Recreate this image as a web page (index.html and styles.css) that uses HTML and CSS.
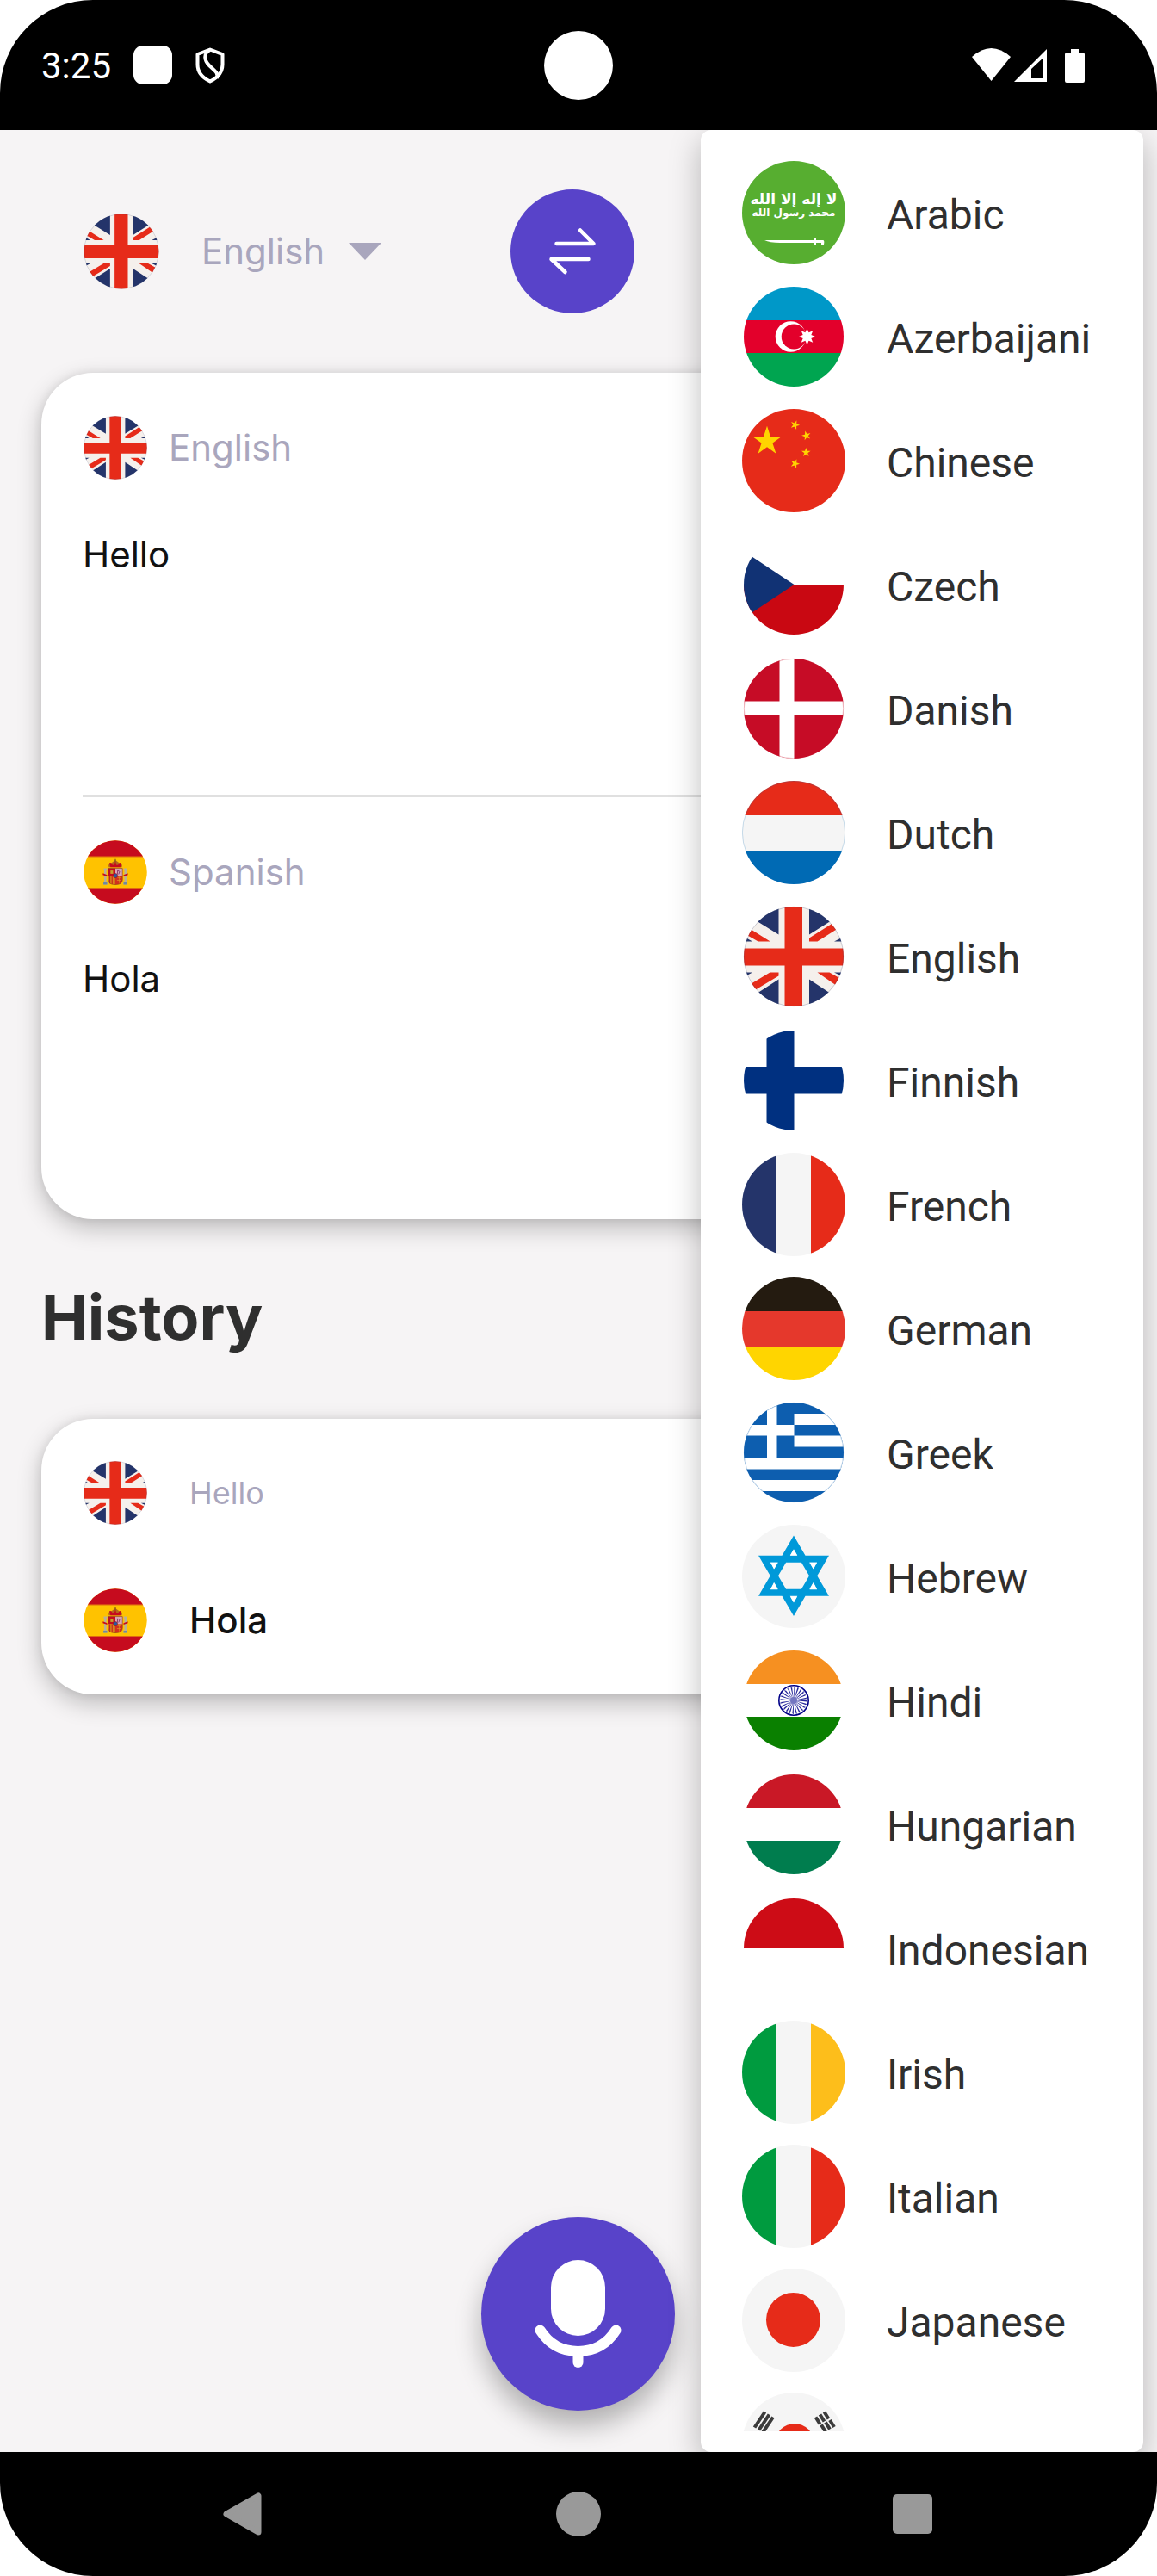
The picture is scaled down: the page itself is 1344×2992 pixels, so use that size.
FILE: index.html
```html
<!DOCTYPE html>
<html lang="en">
<head>
<meta charset="utf-8">
<meta name="viewport" content="width=device-width, initial-scale=1">
<title>Translator</title>
<link rel="stylesheet" href="styles.css">
</head>
<body>

<!-- Flag sprite -->
<svg class="sprite" aria-hidden="true">
  <defs>
    <clipPath id="disc"><circle cx="60" cy="60" r="60"/></clipPath>
    <clipPath id="disc-inset"><circle cx="60" cy="60" r="58"/></clipPath>
    <polygon id="star5" points="0,-1 .588,.809 -.951,-.309 .951,-.309 -.588,.809"/>

    <symbol id="flag-sa" viewBox="0 0 120 120">
      <circle cx="60" cy="60" r="60" fill="#57ae30"/>
      <g fill="#fff" font-family="DejaVu Sans, sans-serif" font-weight="700" text-anchor="middle">
        <text x="60" y="50" font-size="17" direction="rtl">لا إله إلا الله</text>
        <text x="60" y="64" font-size="12" direction="rtl">محمد رسول الله</text>
      </g>
      <path d="M26 92h58v-2h2v2h8q2 0 1 5h-3v-2h-6v2h-2v-2H44q-12 0-18-3z" fill="#fff"/>
    </symbol>

    <symbol id="flag-az" viewBox="0 0 120 120">
      <g clip-path="url(#disc-inset)">
        <path d="M0 0h120v41H0z" fill="#0098c8"/>
        <path d="M0 41h120v38H0z" fill="#e3002b"/>
        <path d="M0 79h120v41H0z" fill="#00a550"/>
      </g>
      <circle cx="56.5" cy="60" r="17.8" fill="#fff"/>
      <circle cx="60.2" cy="60" r="14.5" fill="#e3002b"/>
      <polygon transform="translate(75.5 60) scale(9.5)" fill="#fff" points="0,-1 .21,-.508 .707,-.707 .508,-.21 1,0 .508,.21 .707,.707 .21,.508 0,1 -.21,.508 -.707,.707 -.508,.21 -1,0 -.508,-.21 -.707,-.707 -.21,-.508"/>
    </symbol>

    <symbol id="flag-cn" viewBox="0 0 120 120">
      <circle cx="60" cy="60" r="60" fill="#e62b19"/>
      <g fill="#ffd500">
        <use href="#star5" transform="translate(29 37.5) scale(17.7)"/>
        <use href="#star5" transform="translate(61.5 18.5) rotate(20) scale(5.6)"/>
        <use href="#star5" transform="translate(74.7 31) rotate(-15) scale(5.6)"/>
        <use href="#star5" transform="translate(74.3 50.5) scale(5.6)"/>
        <use href="#star5" transform="translate(61.5 63.5) rotate(20) scale(5.6)"/>
      </g>
    </symbol>

    <symbol id="flag-cz" viewBox="0 0 120 120">
      <g clip-path="url(#disc-inset)">
        <path d="M0 0h120v60H0z" fill="#fff"/>
        <path d="M0 60h120v60H0z" fill="#c90812"/>
        <path d="M0 20l60.500 40L0 100z" fill="#113274"/>
      </g>
    </symbol>

    <symbol id="flag-dk" viewBox="0 0 120 120">
      <g clip-path="url(#disc-inset)">
        <path d="M0 0h120v120H0z" fill="#c60c26"/>
        <path d="M43.500 0h17v120h-17zM0 51.500h120V68H0z" fill="#fff"/>
      </g>
      <circle cx="60" cy="60" r="57.700" fill="none" stroke="#c60c26" stroke-opacity=".4" stroke-width=".6"/>
    </symbol>

    <symbol id="flag-nl" viewBox="0 0 120 120">
      <g clip-path="url(#disc)">
        <path d="M0 0h120v40H0z" fill="#e62b19"/>
        <path d="M0 40h120v41H0z" fill="#f5f5f5"/>
        <path d="M0 81h120v39H0z" fill="#006ab4"/>
      </g>
      <circle cx="60" cy="60" r="59.600" fill="none" stroke="#006ab4" stroke-opacity=".25" stroke-width=".8"/>
    </symbol>

    <symbol id="flag-gb" viewBox="0 0 120 120">
      <g clip-path="url(#disc-inset)">
        <path d="M0 0h120v120H0z" fill="#f5f0ec"/>
        <path fill="#24346a" d="M42.500 0v34.500L19 20-10 0zM78 0v34.500L101 20l29-20zM42.500 120V86.500L20 101l-30 19zM78 120V86.500L100 101l30 19zM5 38.500l7 4H0zM115 38.500l-8 4h13zM12 78.500H0v6.500zM107 78.500h13v6.500z"/>
        <path fill="#e62b19" d="M0 22l32.700 20.500h-14L0 32zM78 42.500V38.500L120 12v10L87.500 42.500zM42.500 78.500V82.500L0 108V98l32.400-19.500zM87.500 78.500h14L120 89v12z"/>
        <path fill="#e62b19" d="M49.500 0h20.500v120H49.500zM0 50.500h120v20H0z"/>
      </g>
      <circle cx="60" cy="60" r="57.700" fill="none" stroke="#24346a" stroke-opacity=".35" stroke-width=".6"/>
    </symbol>

    <symbol id="flag-fi" viewBox="0 0 120 120">
      <g clip-path="url(#disc-inset)">
        <path d="M0 0h120v120H0z" fill="#fff"/>
        <path d="M28.500 0h32v120h-32zM0 44h120v31.500H0z" fill="#003080"/>
      </g>
    </symbol>

    <symbol id="flag-fr" viewBox="0 0 120 120">
      <g clip-path="url(#disc)">
        <path d="M0 0h40v120H0z" fill="#24346a"/>
        <path d="M40 0h40v120H40z" fill="#f5f5f5"/>
        <path d="M80 0h40v120H80z" fill="#e62b19"/>
      </g>
    </symbol>

    <symbol id="flag-de" viewBox="0 0 120 120">
      <g clip-path="url(#disc)">
        <path d="M0 0h120v40H0z" fill="#241b10"/>
        <path d="M0 40h120v41H0z" fill="#e5382c"/>
        <path d="M0 81h120v39H0z" fill="#ffd500"/>
      </g>
    </symbol>

    <symbol id="flag-gr" viewBox="0 0 120 120">
      <g clip-path="url(#disc-inset)">
        <path d="M0 0h120v120H0z" fill="#0d5eaf"/>
        <path d="M60.500 15H120v13H60.500zM60.500 40.500H120v13H60.500zM0 66.500h120v13H0zM0 92h120v13H0zM29 0h11.500v66.500H29zM0 28h60.500v12.500H0z" fill="#fff"/>
      </g>
      <circle cx="60" cy="60" r="57.700" fill="none" stroke="#0d5eaf" stroke-opacity=".35" stroke-width=".6"/>
    </symbol>

    <symbol id="flag-il" viewBox="0 0 120 120">
      <circle cx="60" cy="60" r="60" fill="#f5f5f5"/>
      <path d="M60 20.500l34 58.300H26zM60 98L26 39.700h68z" fill="none" stroke="#0099d9" stroke-width="8"/>
      <path d="M60 28.500l4 7.100h-8zM60 90.500l4-7.100h-8zM33 43.700h8.500L37 51.500zM87 43.700h-8.500L83 51.500zM33 75.300h8.500L37 67zM87 75.300h-8.500L83 67z" fill="#fff"/>
    </symbol>

    <symbol id="flag-in" viewBox="0 0 120 120">
      <g clip-path="url(#disc-inset)">
        <path d="M0 0h120v120H0z" fill="#fff"/>
        <path d="M0 0h120v41H0z" fill="#f69021"/>
        <path d="M0 79h120v41H0z" fill="#0a8000"/>
      </g>
      <circle cx="60" cy="60" r="17.200" fill="none" stroke="#000088" stroke-width="1.600"/>
      <circle cx="60" cy="60" r="15.500" fill="none" stroke="#000088" stroke-width="1" stroke-dasharray="1 3.060"/>
      <circle cx="60" cy="60" r="8" fill="none" stroke="#000088" stroke-width="14" stroke-opacity=".85" stroke-dasharray=".8 1.294"/>
      <circle cx="60" cy="60" r="4" fill="#7476c0"/>
    </symbol>

    <symbol id="flag-hu" viewBox="0 0 120 120">
      <g clip-path="url(#disc-inset)">
        <path d="M0 0h120v120H0z" fill="#fff"/>
        <path d="M0 0h120v41H0z" fill="#c91826"/>
        <path d="M0 79h120v41H0z" fill="#007d4e"/>
      </g>
    </symbol>

    <symbol id="flag-id" viewBox="0 0 120 120">
      <g clip-path="url(#disc-inset)">
        <path d="M0 0h120v120H0z" fill="#fff"/>
        <path d="M0 0h120v60H0z" fill="#cd0c16"/>
      </g>
    </symbol>

    <symbol id="flag-ie" viewBox="0 0 120 120">
      <g clip-path="url(#disc)">
        <path d="M0 0h40v120H0z" fill="#009b3f"/>
        <path d="M40 0h40v120H40z" fill="#f5f5f5"/>
        <path d="M80 0h40v120H80z" fill="#fdbe1b"/>
      </g>
    </symbol>

    <symbol id="flag-it" viewBox="0 0 120 120">
      <g clip-path="url(#disc)">
        <path d="M0 0h40v120H0z" fill="#009b3f"/>
        <path d="M40 0h40v120H40z" fill="#f5f5f5"/>
        <path d="M80 0h40v120H80z" fill="#e62b19"/>
      </g>
    </symbol>

    <symbol id="flag-jp" viewBox="0 0 120 120">
      <circle cx="60" cy="60" r="60" fill="#f5f5f5"/>
      <circle cx="59.500" cy="59.500" r="31.500" fill="#e62b19"/>
    </symbol>

    <symbol id="flag-kr" viewBox="0 0 120 120">
      <circle cx="60" cy="60" r="60" fill="#f5f5f5"/>
      <g fill="none" stroke="#3b3b3b" stroke-width="4">
        <path d="M26.500 22.500L14.500 40.500M31.500 25.500L19.500 43.500M36 28.500L24 46.500"/>
        <path d="M85.500 28.500l5 8M92 37.500l5 8M90.500 25.500l5 8M97 34.500l5 8M95.500 22.500l5 8M102 32l5 8"/>
        <path d="M14.500 80l12 18M19.500 77l12 18M24 74l12 18M97 74L85 92M102 77L90 95M107 80L95 98"/>
      </g>
      <path d="M38.500 58.500a22.500 22.500 0 0 1 45 0z" fill="#e62b19"/>
      <path d="M38.500 58.500a22.500 22.500 0 0 0 45 0z" fill="#24346a"/>
    </symbol>

    <symbol id="flag-es" viewBox="0 0 120 120">
      <g clip-path="url(#disc-inset)">
        <path d="M0 0h120v120H0z" fill="#ffc200"/>
        <path d="M0 0h120v31H0zM0 90h120v30H0z" fill="#c60b1e"/>
        <path d="M0 31h120v1.500H0zM0 88.500h120V90H0z" fill="#e06a10"/>
      </g>
      <path d="M39 53h6v3h-1.500v22H45v5h-7v-5h1.500V56H38zM76 53h6v3h-1.500v22H82v5h-7v-5h1.500V56H75z" fill="#b9b09a"/>
      <path d="M37 62l8 3v3l-8-3zM83 62l-8 3v3l8-3z" fill="#c60b1e"/>
      <path d="M38 79h7v4h-7zM75 79h7v4h-7z" fill="#6f8aa0"/>
      <path d="M48 51q-2-7 5-8l7-5 7 5q7 1 5 8z" fill="#b5651d"/>
      <path d="M49 43q4-2 6 4h3l2-7 2 7h3q2-6 6-4l-2 8H51z" fill="#c60b1e"/>
      <path d="M59 36h2v6h-2z" fill="#8a5a1a"/>
      <path d="M47 53h13v14H47z" fill="#c60b1e"/>
      <path d="M60 53h13v14H60z" fill="#d9a5b8"/>
      <path d="M47 67h13v16q-13 0-13-9z" fill="#d8871a"/>
      <path d="M60 67h13v7q0 9-13 9z" fill="#d2301e"/>
      <path d="M50 67v14M54 67v15M58 67v16" stroke="#c60b1e" stroke-width="1.500"/>
      <path d="M51 57h5v6h-5z" fill="#c8a12a"/>
      <path d="M64 70h6M63 75h8M67 68v12" stroke="#e0a020" stroke-width="1"/>
      <path d="M64 64v-7l4 2-2 5" fill="none" stroke="#8a3a6a" stroke-width="1.500"/>
      <circle cx="60" cy="66.500" r="4" fill="#2a5aa0" stroke="#a11" stroke-width="1"/>
      <path d="M47 53h26v21q0 9-13 9t-13-9z" fill="none" stroke="#8a3a1a" stroke-width="1"/>
    </symbol>
  </defs>
</svg>

<div class="phone">
  <header class="status-bar">
    <span class="status-time">3:25</span>
    <span class="status-square"></span>
    <svg class="status-shield" viewBox="0 0 34 42" aria-hidden="true">
      <g fill="none" stroke="#fff" stroke-width="4" stroke-linejoin="round">
        <path d="M17 2.500L31.500 8v12c0 9-6 15.500-14.500 19.500C8.500 35.500 2.500 29 2.500 20V8z"/>
        <path d="M17 3c-8 4-7 12-1 18s11 8 9 15"/>
      </g>
    </svg>
    <span class="status-spacer"></span>
    <svg class="status-net" viewBox="0 0 88 40" aria-hidden="true">
      <path d="M0 10Q22.500-10 45 10L22.500 38z" fill="#fff"/>
      <path d="M87 1v38H49zM83 11L69 24v11h14z" fill="#fff" fill-rule="evenodd"/>
    </svg>
    <svg class="status-battery" viewBox="0 0 23 40" aria-hidden="true">
      <path d="M7 1h9v4h5q2 0 2 2v31q0 2-2 2H2q-2 0-2-2V7q0-2 2-2h5z" fill="#fff"/>
    </svg>
    <span class="camera"></span>
  </header>

  <main class="screen">
    <section class="language-bar">
      <label class="picker">
        <svg class="flag flag-medium" aria-hidden="true"><use href="#flag-gb"/></svg>
        <select class="picker-select" aria-label="Source language">
          <option>English</option>
          <option>Spanish</option>
        </select>
        <svg class="picker-arrow" viewBox="0 0 38 20" aria-hidden="true"><path d="M0 0h38L19 20z" fill="#a9a6bd"/></svg>
      </label>
      <button class="swap" type="button" aria-label="Swap languages">
        <svg viewBox="0 0 144 144" aria-hidden="true">
          <path d="M53.500 63h43L81 47.500M90.500 81h-43L63.500 96" fill="none" stroke="#fff" stroke-width="4.500" stroke-linecap="round" stroke-linejoin="round"/>
        </svg>
      </button>
    </section>

    <section class="card">
      <div class="pane">
        <label class="pane-head" for="source-text">
          <svg class="flag flag-small" aria-hidden="true"><use href="#flag-gb"/></svg>
          <span class="muted">English</span>
        </label>
        <textarea class="pane-text" id="source-text" spellcheck="false">Hello</textarea>
      </div>
      <hr class="divider">
      <div class="pane">
        <label class="pane-head" for="target-text">
          <svg class="flag flag-small" aria-hidden="true"><use href="#flag-es"/></svg>
          <span class="muted">Spanish</span>
        </label>
        <textarea class="pane-text" id="target-text" spellcheck="false" readonly>Hola</textarea>
      </div>
    </section>

    <h1 class="title">History</h1>

    <article class="card history">
      <div class="history-row">
        <svg class="flag flag-small" aria-hidden="true"><use href="#flag-gb"/></svg>
        <span class="history-source">Hello</span>
      </div>
      <div class="history-row">
        <svg class="flag flag-small" aria-hidden="true"><use href="#flag-es"/></svg>
        <span class="history-target">Hola</span>
      </div>
    </article>

    <button class="mic" type="button" aria-label="Speak">
      <svg viewBox="0 0 225 225" aria-hidden="true">
        <rect x="81" y="50" width="63" height="88" rx="31.500" fill="#fff"/>
        <path d="M68.500 131.500Q84 156 112.500 156t44-24.500" fill="none" stroke="#fff" stroke-width="12" stroke-linecap="round"/>
        <path d="M112.500 158v11" stroke="#fff" stroke-width="12" stroke-linecap="round"/>
      </svg>
    </button>

    <div class="menu">
      <ul class="menu-list">
        <li><button class="menu-item" type="button"><svg class="flag flag-large" aria-hidden="true"><use href="#flag-sa"/></svg><span>Arabic</span></button></li>
        <li><button class="menu-item" type="button"><svg class="flag flag-large" aria-hidden="true"><use href="#flag-az"/></svg><span>Azerbaijani</span></button></li>
        <li><button class="menu-item" type="button"><svg class="flag flag-large" aria-hidden="true"><use href="#flag-cn"/></svg><span>Chinese</span></button></li>
        <li><button class="menu-item" type="button"><svg class="flag flag-large" aria-hidden="true"><use href="#flag-cz"/></svg><span>Czech</span></button></li>
        <li><button class="menu-item" type="button"><svg class="flag flag-large" aria-hidden="true"><use href="#flag-dk"/></svg><span>Danish</span></button></li>
        <li><button class="menu-item" type="button"><svg class="flag flag-large" aria-hidden="true"><use href="#flag-nl"/></svg><span>Dutch</span></button></li>
        <li><button class="menu-item" type="button"><svg class="flag flag-large" aria-hidden="true"><use href="#flag-gb"/></svg><span>English</span></button></li>
        <li><button class="menu-item" type="button"><svg class="flag flag-large" aria-hidden="true"><use href="#flag-fi"/></svg><span>Finnish</span></button></li>
        <li><button class="menu-item" type="button"><svg class="flag flag-large" aria-hidden="true"><use href="#flag-fr"/></svg><span>French</span></button></li>
        <li><button class="menu-item" type="button"><svg class="flag flag-large" aria-hidden="true"><use href="#flag-de"/></svg><span>German</span></button></li>
        <li><button class="menu-item" type="button"><svg class="flag flag-large" aria-hidden="true"><use href="#flag-gr"/></svg><span>Greek</span></button></li>
        <li><button class="menu-item" type="button"><svg class="flag flag-large" aria-hidden="true"><use href="#flag-il"/></svg><span>Hebrew</span></button></li>
        <li><button class="menu-item" type="button"><svg class="flag flag-large" aria-hidden="true"><use href="#flag-in"/></svg><span>Hindi</span></button></li>
        <li><button class="menu-item" type="button"><svg class="flag flag-large" aria-hidden="true"><use href="#flag-hu"/></svg><span>Hungarian</span></button></li>
        <li><button class="menu-item" type="button"><svg class="flag flag-large" aria-hidden="true"><use href="#flag-id"/></svg><span>Indonesian</span></button></li>
        <li><button class="menu-item" type="button"><svg class="flag flag-large" aria-hidden="true"><use href="#flag-ie"/></svg><span>Irish</span></button></li>
        <li><button class="menu-item" type="button"><svg class="flag flag-large" aria-hidden="true"><use href="#flag-it"/></svg><span>Italian</span></button></li>
        <li><button class="menu-item" type="button"><svg class="flag flag-large" aria-hidden="true"><use href="#flag-jp"/></svg><span>Japanese</span></button></li>
        <li><button class="menu-item" type="button"><svg class="flag flag-large" aria-hidden="true"><use href="#flag-kr"/></svg><span>Korean</span></button></li>
      </ul>
    </div>
  </main>

  <nav class="nav-bar">
    <button class="nav-button" type="button" aria-label="Back">
      <svg viewBox="0 0 52 52" aria-hidden="true"><path d="M5 26L42 5v42z" fill="#999" stroke="#999" stroke-width="7" stroke-linejoin="round"/></svg>
    </button>
    <button class="nav-button" type="button" aria-label="Home">
      <svg viewBox="0 0 52 52" aria-hidden="true"><circle cx="26" cy="26" r="26" fill="#999"/></svg>
    </button>
    <button class="nav-button" type="button" aria-label="Recent apps">
      <svg viewBox="0 0 52 52" aria-hidden="true"><rect x="3" y="3" width="46" height="46" rx="5" fill="#999"/></svg>
    </button>
  </nav>
</div>

</body>
</html>
```
FILE: styles.css
```css
* {
  box-sizing: border-box;
}

body {
  margin: 0;
  background: #fff;
  color: #111;
  font-family: Inter, "Liberation Sans", sans-serif;
  font-size: 42px;
  line-height: 52px;
}

button,
select,
textarea {
  margin: 0;
  padding: 0;
  border: 0;
  background: none;
  color: inherit;
  font: inherit;
}

svg {
  display: block;
}

.sprite {
  position: absolute;
  width: 0;
  height: 0;
}

.phone {
  display: flex;
  flex-direction: column;
  min-height: 100vh;
  overflow: hidden;
  border-radius: 108px;
  background: #000;
}

/* Status bar */

.status-bar {
  position: relative;
  display: flex;
  flex: none;
  align-items: center;
  height: 151px;
  padding: 0 84px 0 48px;
  color: #fff;
  font-family: Roboto, sans-serif;
}

.status-time {
  padding-top: 2px;
}

.status-square {
  width: 45px;
  height: 45px;
  margin-left: 26px;
  border-radius: 11px;
  background: #fff;
}

.status-shield {
  width: 34px;
  height: 42px;
  margin-left: 27px;
}

.status-spacer {
  flex: 1;
}

.status-net {
  width: 88px;
  height: 40px;
}

.status-battery {
  width: 23px;
  height: 40px;
  margin-left: 20px;
}

.camera {
  position: absolute;
  top: 36px;
  left: 50%;
  width: 80px;
  height: 80px;
  margin-left: -40px;
  border-radius: 50%;
  background: #fff;
}

/* Translator screen */

.screen {
  position: relative;
  flex: 1;
  overflow: hidden;
  padding: 0 48px;
  background: #f6f4f5;
}

.language-bar {
  display: grid;
  grid-template-columns: 1fr 144px 1fr;
  align-items: center;
  margin-right: 14px;
  padding: 69px 0;
}

.picker {
  display: flex;
  align-items: center;
  padding-left: 48px;
  color: #a9a6bd;
}

.picker-select {
  width: 144px;
  margin: 0 27px 0 48px;
  appearance: none;
  outline: none;
}

.picker-arrow {
  width: 38px;
  height: 20px;
}

.flag {
  flex: none;
}

.flag-small {
  width: 76px;
  height: 76px;
}

.flag-medium {
  width: 90px;
  height: 90px;
}

.flag-large {
  width: 120px;
  height: 120px;
}

.swap {
  width: 144px;
  height: 144px;
  border-radius: 50%;
  background: #5843c9;
}

.card {
  padding: 0 48px;
  border-radius: 60px;
  background: #fff;
  box-shadow: 0 10px 28px rgba(0, 0, 0, 0.24), 0 0 12px rgba(0, 0, 0, 0.08);
}

.pane {
  height: 490px;
  padding-top: 48px;
}

.pane-head {
  display: flex;
  gap: 24px;
  align-items: center;
  height: 77px;
}

.muted {
  color: #a9a6bd;
}

.pane-text {
  display: block;
  width: 100%;
  height: 260px;
  margin-top: 60px;
  resize: none;
  outline: none;
}

.divider {
  height: 3px;
  margin: 0;
  border: 0;
  background: #e0e0e0;
}

.title {
  margin: 70px 0 74px;
  color: #2f2f2f;
  font-size: 72px;
  font-weight: 700;
  line-height: 88px;
}

.history {
  display: flex;
  flex-direction: column;
  gap: 72px;
  padding: 48px;
}

.history-row {
  display: flex;
  gap: 48px;
  align-items: center;
}

.history-source {
  color: #a9a6bd;
  font-size: 36px;
}

.history-target {
  font-weight: 500;
}

.mic {
  position: absolute;
  bottom: 48px;
  left: 50%;
  width: 225px;
  height: 225px;
  margin-left: -113px;
  border-radius: 50%;
  background: #5843c9;
  box-shadow: 0 18px 30px rgba(0, 0, 0, 0.28);
}

/* Language menu */

.menu {
  position: absolute;
  top: 0;
  right: 16px;
  bottom: 0;
  width: 514px;
  padding: 24px 0;
  border-radius: 12px;
  background: #fff;
  box-shadow: 0 12px 36px rgba(0, 0, 0, 0.26);
}

.menu-list {
  height: 100%;
  margin: 0;
  padding: 0;
  overflow-y: auto;
  list-style: none;
  scrollbar-width: none;
}

.menu-item {
  display: flex;
  gap: 48px;
  align-items: center;
  width: 100%;
  height: 144px;
  padding: 0 48px;
  color: #2f2f2f;
  font-family: Roboto, sans-serif;
  font-size: 48px;
  text-align: left;
}

.menu-item span {
  padding-top: 6px;
}

/* System navigation */

.nav-bar {
  display: flex;
  flex: none;
  gap: 336px;
  align-items: center;
  justify-content: center;
  height: 144px;
}

.nav-button {
  width: 52px;
  height: 52px;
}
```
